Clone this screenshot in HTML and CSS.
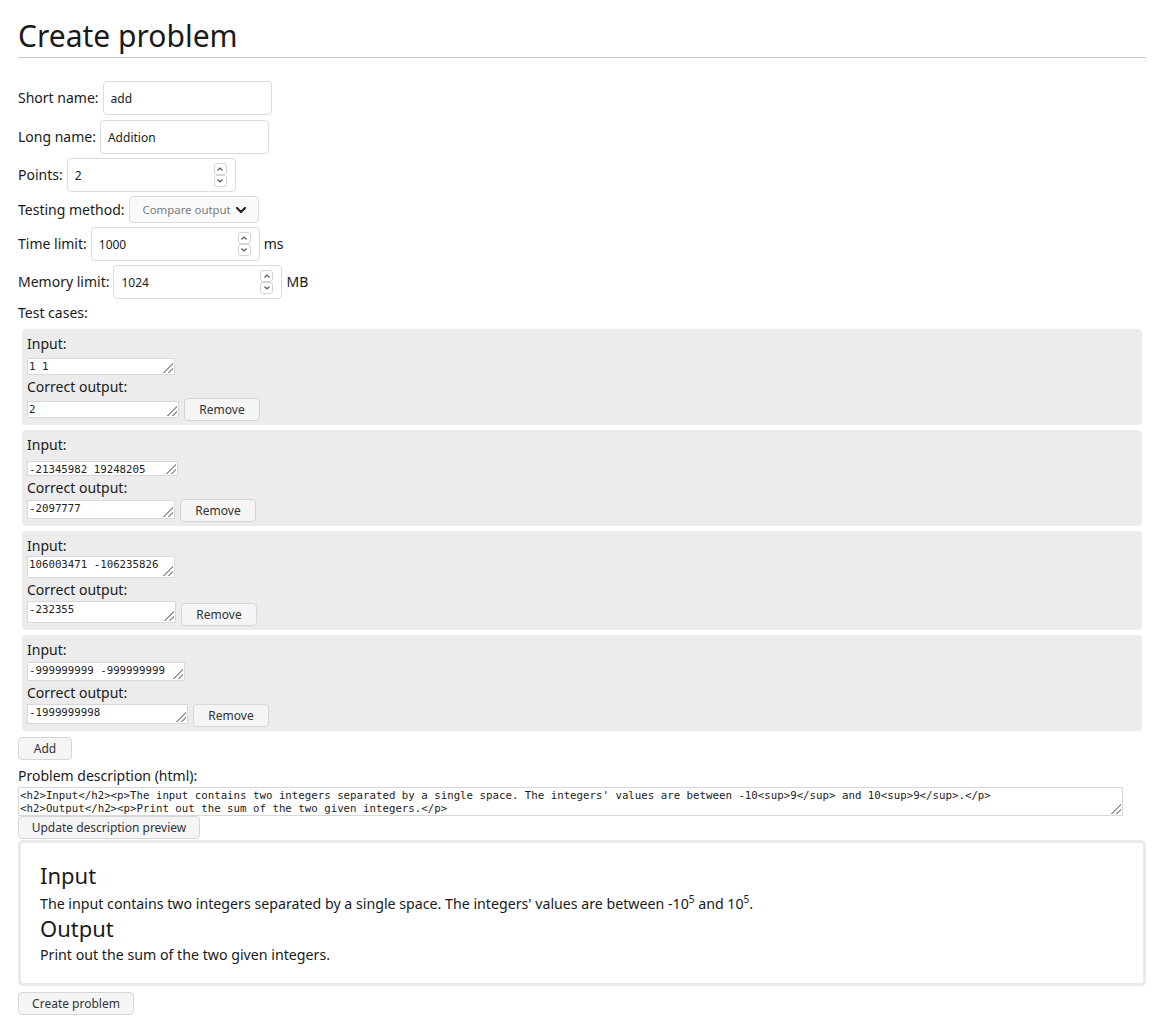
FILE: index.html
```html
<!DOCTYPE html>
<html lang="en">
<head>
<meta charset="utf-8">
<title>Create problem</title>
<link rel="stylesheet" href="styles.css">
</head>
<body>
<h1 class="title">Create problem</h1>
<form class="form">
  <div class="row">
    <label class="lbl">Short name:</label>
    <input class="txt w-short" type="text" value="add">
  </div>
  <div class="row">
    <label class="lbl">Long name:</label>
    <input class="txt w-long" type="text" value="Addition">
  </div>
  <div class="row">
    <label class="lbl">Points:</label>
    <span class="num">
      <input class="num-in" type="text" value="2">
      <span class="spin">
        <span class="spin-btn"><svg viewBox="0 0 8 6" width="8" height="6"><path d="M1.5 4.5 L4 2 L6.5 4.5" fill="none" stroke="#555" stroke-width="1.2"/></svg></span>
        <span class="spin-btn"><svg viewBox="0 0 8 6" width="8" height="6"><path d="M1.5 1.5 L4 4 L6.5 1.5" fill="none" stroke="#555" stroke-width="1.2"/></svg></span>
      </span>
    </span>
  </div>
  <div class="row">
    <label class="lbl">Testing method:</label>
    <span class="select">
      <span class="select-val">Compare output</span>
      <svg class="chev" viewBox="0 0 12 8" width="12" height="8"><path d="M2 2 L6 6 L10 2" fill="none" stroke="#222" stroke-width="2.2" stroke-linecap="round" stroke-linejoin="round"/></svg>
    </span>
  </div>
  <div class="row">
    <label class="lbl">Time limit:</label>
    <span class="num">
      <input class="num-in" type="text" value="1000">
      <span class="spin">
        <span class="spin-btn"><svg viewBox="0 0 8 6" width="8" height="6"><path d="M1.5 4.5 L4 2 L6.5 4.5" fill="none" stroke="#555" stroke-width="1.2"/></svg></span>
        <span class="spin-btn"><svg viewBox="0 0 8 6" width="8" height="6"><path d="M1.5 1.5 L4 4 L6.5 1.5" fill="none" stroke="#555" stroke-width="1.2"/></svg></span>
      </span>
    </span>
    <span class="unit">ms</span>
  </div>
  <div class="row">
    <label class="lbl">Memory limit:</label>
    <span class="num">
      <input class="num-in" type="text" value="1024">
      <span class="spin">
        <span class="spin-btn"><svg viewBox="0 0 8 6" width="8" height="6"><path d="M1.5 4.5 L4 2 L6.5 4.5" fill="none" stroke="#555" stroke-width="1.2"/></svg></span>
        <span class="spin-btn"><svg viewBox="0 0 8 6" width="8" height="6"><path d="M1.5 1.5 L4 4 L6.5 1.5" fill="none" stroke="#555" stroke-width="1.2"/></svg></span>
      </span>
    </span>
    <span class="unit">MB</span>
  </div>

  <div class="section-lbl">Test cases:</div>

  <div class="case">
    <div class="case-lbl">Input:</div>
    <div class="case-row in-row"><textarea class="ta ta-1i">1 1</textarea></div>
    <div class="case-lbl">Correct output:</div>
    <div class="case-row out-row"><textarea class="ta ta-1o">2</textarea><button type="button" class="btn">Remove</button></div>
  </div>
  <div class="case">
    <div class="case-lbl">Input:</div>
    <div class="case-row in-row"><textarea class="ta ta-2i">-21345982 19248205</textarea></div>
    <div class="case-lbl">Correct output:</div>
    <div class="case-row out-row"><textarea class="ta ta-2o">-2097777</textarea><button type="button" class="btn">Remove</button></div>
  </div>
  <div class="case">
    <div class="case-lbl">Input:</div>
    <div class="case-row in-row"><textarea class="ta ta-3i">106003471 -106235826</textarea></div>
    <div class="case-lbl">Correct output:</div>
    <div class="case-row out-row"><textarea class="ta ta-3o">-232355</textarea><button type="button" class="btn">Remove</button></div>
  </div>
  <div class="case">
    <div class="case-lbl">Input:</div>
    <div class="case-row in-row"><textarea class="ta ta-4i">-999999999 -999999999</textarea></div>
    <div class="case-lbl">Correct output:</div>
    <div class="case-row out-row"><textarea class="ta ta-4o">-1999999998</textarea><button type="button" class="btn">Remove</button></div>
  </div>

  <button type="button" class="btn btn-add">Add</button>

  <div class="desc-lbl">Problem description (html):</div>
  <textarea class="ta desc-ta">&lt;h2&gt;Input&lt;/h2&gt;&lt;p&gt;The input contains two integers separated by a single space. The integers' values are between -10&lt;sup&gt;9&lt;/sup&gt; and 10&lt;sup&gt;9&lt;/sup&gt;.&lt;/p&gt;
&lt;h2&gt;Output&lt;/h2&gt;&lt;p&gt;Print out the sum of the two given integers.&lt;/p&gt;</textarea>
  <button type="button" class="btn btn-block">Update description preview</button>

  <div class="preview">
    <h2 class="pv-h">Input</h2>
    <p class="pv-p pv-sup">The input contains two integers separated by a single space. The integers' values are between -10<sup>5</sup> and 10<sup>5</sup>.</p>
    <h2 class="pv-h">Output</h2>
    <p class="pv-p">Print out the sum of the two given integers.</p>
  </div>

  <button type="button" class="btn btn-create">Create problem</button>
</form>
</body>
</html>
```

FILE: styles.css
```css
* { box-sizing: border-box; }

body {
  margin: 0;
  padding: 14px 18px 20px;
  font-family: "Noto Sans", "Open Sans", sans-serif;
  font-size: 14px;
  color: #1a1a1a;
  background: #fff;
}

.title {
  margin: 0;
  font-size: 30px;
  font-weight: 400;
  line-height: 43px;
  border-bottom: 1px solid #c8c8c8;
}

.form {
  margin-top: 23px;
}

.row {
  display: flex;
  align-items: center;
  gap: 4px;
  min-height: 27px;
  margin-bottom: 4px;
}
.row:first-child { margin-bottom: 5px; }

.lbl { line-height: 20px; }
.unit { line-height: 20px; }

.txt {
  height: 34px;
  border: 1px solid #dcdcdc;
  border-radius: 4px;
  padding: 0 7px;
  font-family: "Noto Sans", sans-serif;
  font-size: 12px;
  color: #222;
  background: #fff;
}
.w-short { width: 169px; }
.w-long { width: 169px; }

.num {
  display: inline-flex;
  align-items: center;
  width: 169px;
  height: 34px;
  border: 1px solid #dcdcdc;
  border-radius: 4px;
  padding: 0 8px 0 7px;
  background: #fff;
}
.num-in {
  flex: 1;
  min-width: 0;
  border: 0;
  padding: 0;
  font-family: "Noto Sans", sans-serif;
  font-size: 12px;
  color: #222;
  background: transparent;
  outline: none;
}
.spin {
  display: flex;
  flex-direction: column;
}
.spin-btn {
  width: 13px;
  height: 12px;
  border: 1px solid #d4d4d4;
  border-radius: 3px;
  display: flex;
  align-items: center;
  justify-content: center;
  background: #fff;
}

.select {
  display: inline-flex;
  align-items: center;
  justify-content: space-between;
  height: 27px;
  width: 130px;
  padding: 0 11px 0 13px;
  border: 1px solid #dcdcdc;
  border-radius: 4px;
  background: #fafafa;
  font-size: 11.4px;
  color: #7a7a7a;
  white-space: nowrap;
}
.chev { flex: none; }

.section-lbl {
  line-height: 20px;
  margin-top: 0;
}

.case {
  background: #ececec;
  border-radius: 4px;
  margin: 0 4px 5px;
  padding: 5px 5px 4px;
}
.section-lbl + .case { margin-top: 6px; }
.case-lbl { line-height: 20px; }
.case-row {
  display: flex;
  align-items: flex-end;
  gap: 5px;
  min-height: 23px;
}
.in-row .ta { margin-bottom: 2px; }
.out-row { margin-top: 1px; }
.out-row .ta { margin-bottom: 3px; }

.ta {
  font-family: "DejaVu Sans Mono", monospace;
  font-size: 10.75px;
  line-height: 13px;
  color: #222;
  border: 1px solid #d8d8d8;
  padding: 1px 1px 0;
  margin: 0;
  display: block;
  overflow: hidden;
  resize: none;
  background:
    linear-gradient(to bottom right, #fff 50%, rgba(255,255,255,0) 50%) right 1px bottom 1px / 12px 12px no-repeat,
    repeating-linear-gradient(135deg, rgba(255,255,255,0) 0 2.2px, #9a9a9a 2.2px 3.7px) right 1px bottom 1px / 12px 12px no-repeat,
    #fff;
}
.ta-1i { width: 148px; height: 17px; }
.ta-1o { width: 152px; height: 17px; }
.ta-2i { width: 151px; height: 15px; }
.ta-2o { width: 148px; height: 19px; }
.ta-3i { width: 148px; height: 22px; }
.ta-3o { width: 149px; height: 22px; }
.ta-4i { width: 158px; height: 19px; }
.ta-4o { width: 161px; height: 20px; }

.btn {
  height: 23px;
  padding: 0 16px;
  border: 1px solid #d6d6d6;
  border-radius: 4px;
  background: #f5f5f5;
  font-family: "Noto Sans", sans-serif;
  font-size: 12px;
  color: #333;
  cursor: pointer;
}
.case .btn { width: 76px; padding: 0; flex: none; }

.btn-add {
  display: block;
  width: 54px;
  padding: 0;
  margin-top: 6px;
}

.desc-lbl {
  line-height: 20px;
  margin-top: 6px;
}
.desc-ta {
  width: 1105px;
  height: 29px;
  margin-top: 1px;
  padding: 1px 1px 0;
}
.btn-block {
  display: block;
  width: 182px;
  padding: 0;
  margin-top: 0;
}

.preview {
  margin-top: 1px;
  border: 3px solid #e9e9e9;
  border-radius: 5px;
  padding: 17px 19px 17px;
}
.pv-h {
  margin: 0;
  font-size: 22px;
  font-weight: 400;
  line-height: 30px;
}
.pv-p {
  margin: 0;
  font-size: 14.2px;
  line-height: 23px;
}
.pv-sup {
  padding-top: 5px;
  line-height: 18px;
}
.pv-p sup { font-size: 10px; line-height: 0; }

.btn-create {
  display: block;
  width: 116px;
  padding: 0;
  margin-top: 6px;
}
```
